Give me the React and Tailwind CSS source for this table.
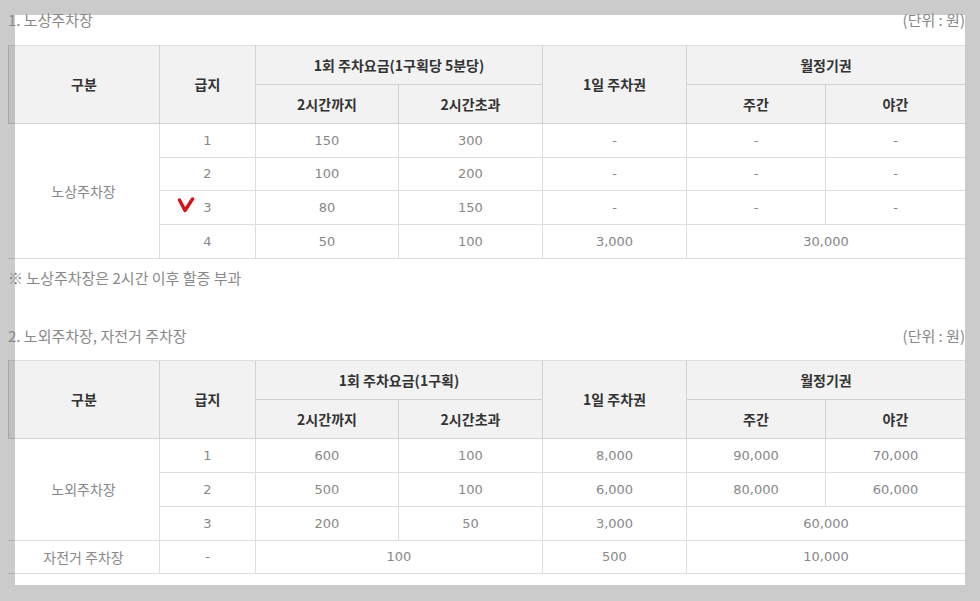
import React from 'react';

const cols = 'grid grid-cols-[152px_96px_143px_144px_144px_139px_139px]';

const Head = ({ children, span = '' }) => (
  <div
    className={`flex items-center justify-center border-r border-b border-black/[0.13] bg-black/[0.05] text-[14px] font-semibold text-[#333] ${span}`}
  >
    {children}
  </div>
);

const Cell = ({ children, span = '', last = false, ko = false }) => (
  <div
    className={`flex items-center justify-center border-b border-black/[0.13] font-['DejaVu_Sans','Noto_Sans_CJK_KR',sans-serif] text-[#888] ${
      ko ? "font-['Noto_Sans_CJK_KR',sans-serif] text-[14px]" : 'text-[13px]'
    } ${last ? '' : 'border-r'} ${span}`}
  >
    {children}
  </div>
);

const Title = ({ children }) => (
  <div className="flex h-[24px] items-center justify-between text-[15px] text-[#888]">
    <span>{children}</span>
    <span>(단위 : 원)</span>
  </div>
);

const HeaderRows = ({ feeLabel }) => (
  <>
    <Head span="row-span-2 border-l">구분</Head>
    <Head span="row-span-2">급지</Head>
    <Head span="col-span-2">{feeLabel}</Head>
    <Head span="row-span-2">1일 주차권</Head>
    <Head span="col-span-2 border-r-0">월정기권</Head>
    <Head>2시간까지</Head>
    <Head>2시간초과</Head>
    <Head>주간</Head>
    <Head span="border-r-0">야간</Head>
  </>
);

const street = [
  ['1', '150', '300', '-', '-', '-'],
  ['2', '100', '200', '-', '-', '-'],
  ['3', '80', '150', '-', '-', '-'],
];

const offStreet = [
  ['1', '600', '100', '8,000', '90,000', '70,000'],
  ['2', '500', '100', '6,000', '80,000', '60,000'],
];

const Row = ({ row }) =>
  row.map((v, i) => (
    <Cell key={i} last={i === row.length - 1}>
      {v}
    </Cell>
  ));

export default function App() {
  return (
    <div className="h-[601px] w-[980px] overflow-hidden bg-[#cbcbcb] p-[15px] font-['Noto_Sans_CJK_KR',sans-serif]">
      <div className="flow-root h-[570px] w-[950px] bg-white">
        <div className="relative -ml-[7px] -mt-[7px] w-[957px]">
          <Title>1. 노상주차장</Title>

          <div className={`${cols} mt-[13px] grid-rows-[39px_39px_34px_33px_34px_34px] border-t border-black/[0.13]`}>
            <HeaderRows feeLabel="1회 주차요금(1구획당 5분당)" />
            <Cell span="row-span-4" ko>
              노상주차장
            </Cell>
            {street.map((r, i) => (
              <Row key={i} row={r} />
            ))}
            <Cell>4</Cell>
            <Cell>50</Cell>
            <Cell>100</Cell>
            <Cell>3,000</Cell>
            <Cell span="col-span-2" last>
              30,000
            </Cell>
          </div>

          <div className="mt-[7px] flex h-[24px] items-center text-[15px] text-[#888]">
            ※ 노상주차장은 2시간 이후 할증 부과
          </div>

          <div className="mt-[34px]">
            <Title>2. 노외주차장, 자전거 주차장</Title>
          </div>

          <div className={`${cols} mt-[12px] grid-rows-[39px_39px_34px_34px_34px_33px] border-t border-black/[0.13]`}>
            <HeaderRows feeLabel="1회 주차요금(1구획)" />
            <Cell span="row-span-3" ko>
              노외주차장
            </Cell>
            {offStreet.map((r, i) => (
              <Row key={i} row={r} />
            ))}
            <Cell>3</Cell>
            <Cell>200</Cell>
            <Cell>50</Cell>
            <Cell>3,000</Cell>
            <Cell span="col-span-2" last>
              60,000
            </Cell>
            <Cell ko>자전거 주차장</Cell>
            <Cell>-</Cell>
            <Cell span="col-span-2">100</Cell>
            <Cell>500</Cell>
            <Cell span="col-span-2" last>
              10,000
            </Cell>
          </div>

          {/* red check mark */}
          <svg
            className="absolute left-[169px] top-[189px]"
            width="18"
            height="16"
            viewBox="0 0 18 16"
          >
            <path
              d="M2.5 3 L8 13.5 L15.5 2"
              fill="none"
              stroke="#d3131b"
              strokeWidth="3.4"
              strokeLinecap="round"
              strokeLinejoin="round"
            />
          </svg>
        </div>
      </div>
    </div>
  );
}
